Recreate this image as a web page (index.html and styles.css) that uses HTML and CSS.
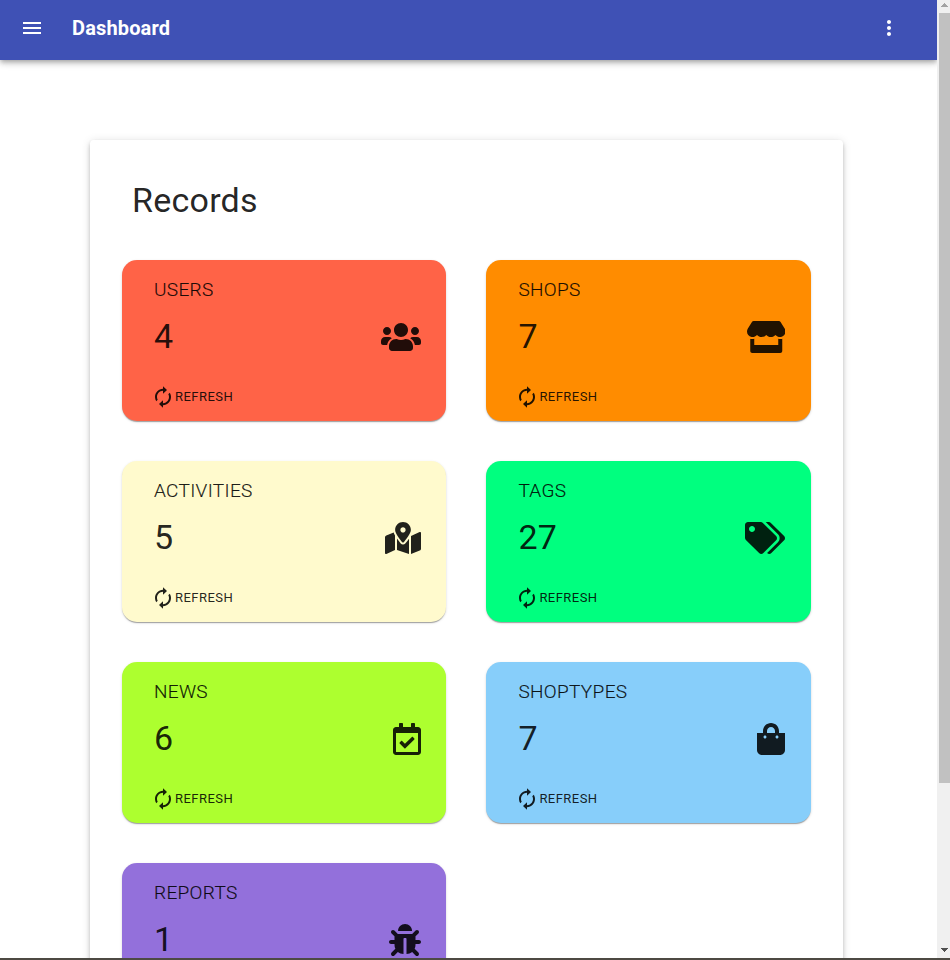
FILE: index.html
```
<!DOCTYPE html>
<html lang="en">
<head>
<meta charset="utf-8">
<title>Dashboard</title>
<link rel="stylesheet" href="styles.css">
</head>
<body>
<svg class="defs" width="0" height="0">
  <symbol id="refresh" viewBox="0 0 24 24"><path d="M12 5.8v2.9L16 5l-4-3.8v2.6c-4.42 0-8 3.78-8 8.2 0 1.57.46 3.03 1.24 4.26L6.7 14.8c-.45-.83-.7-1.79-.7-2.8 0-3.31 2.69-6.2 6-6.2zm6.76 1.94L17.3 9.2c.44.84.7 1.79.7 2.8 0 3.31-2.69 6.2-6 6.2v-2.9L8 19l4 3.8v-2.6c4.42 0 8-3.78 8-8.2 0-1.57-.46-3.03-1.24-4.26z"/></symbol>
</svg>
<div class="window">
  <div class="page">
    <header class="appbar">
      <svg class="menu" viewBox="0 0 24 24"><path d="M3 18h18v-2H3v2zm0-5h18v-2H3v2zm0-7v2h18V6H3z"/></svg>
      <h1 class="title">Dashboard</h1>
      <svg class="more" viewBox="0 0 24 24"><path d="M12 8c1.1 0 2-.9 2-2s-.9-2-2-2-2 .9-2 2 .9 2 2 2zm0 2c-1.1 0-2 .9-2 2s.9 2 2 2 2-.9 2-2-.9-2-2-2zm0 6c-1.1 0-2 .9-2 2s.9 2 2 2 2-.9 2-2-.9-2-2-2z"/></svg>
    </header>
    <main class="panel">
      <h2 class="heading">Records</h2>
      <div class="grid">
        <section class="card users">
          <div class="label">USERS</div>
          <div class="row"><span class="count">4</span><svg class="icon" viewBox="0 0 640 512"><path d="M96 224c35.3 0 64-28.7 64-64s-28.7-64-64-64-64 28.7-64 64 28.7 64 64 64zm448 0c35.3 0 64-28.7 64-64s-28.7-64-64-64-64 28.7-64 64 28.7 64 64 64zm32 32h-64c-17.6 0-33.5 7.1-45.1 18.6 40.3 22.1 68.9 62 75.1 109.4h66c17.7 0 32-14.3 32-32v-32c0-35.3-28.7-64-64-64zm-256 0c61.9 0 112-50.1 112-112S381.9 32 320 32 208 82.1 208 144s50.1 112 112 112zm76.8 32h-8.3c-20.8 10-43.9 16-68.5 16s-47.6-6-68.5-16h-8.3C179.6 288 128 339.6 128 403.2V432c0 26.5 21.5 48 48 48h288c26.5 0 48-21.5 48-48v-28.8c0-63.6-51.6-115.2-115.2-115.2zm-223.7-13.4C161.5 263.1 145.6 256 128 256H64c-35.3 0-64 28.7-64 64v32c0 17.7 14.3 32 32 32h65.9c6.3-47.4 34.9-87.3 75.2-109.4z"/></svg></div>
          <div class="action"><svg class="refresh"><use href="#refresh"/></svg><span>REFRESH</span></div>
        </section>
        <section class="card shops">
          <div class="label">SHOPS</div>
          <div class="row"><span class="count">7</span><svg class="icon" viewBox="0 0 616 512"><path d="M602 118.6L537.1 15C531.3 5.7 521 0 510 0H106C95 0 84.7 5.7 78.9 15L14 118.6c-33.5 53.5-3.8 127.9 58.8 136.4 4.5.6 9.1.9 13.7.9 29.6 0 55.8-13 73.8-33.1 18 20.1 44.3 33.1 73.8 33.1 29.6 0 55.8-13 73.8-33.1 18 20.1 44.3 33.1 73.8 33.1 29.6 0 55.8-13 73.8-33.1 18.1 20.1 44.3 33.1 73.8 33.1 4.7 0 9.2-.3 13.7-.9 62.8-8.4 92.6-82.8 59-136.4zM529.5 288c-10 0-19.9-1.5-29.5-3.8V384H116v-99.8c-9.6 2.2-19.5 3.8-29.5 3.8-6 0-12.1-.4-18-1.2-5.6-.8-11.1-2.1-16.4-3.6V480c0 17.7 14.3 32 32 32h448c17.7 0 32-14.3 32-32V283.2c-5.4 1.6-10.8 2.9-16.4 3.6-6.1.8-12.1 1.2-18.2 1.2z"/></svg></div>
          <div class="action"><svg class="refresh"><use href="#refresh"/></svg><span>REFRESH</span></div>
        </section>
        <section class="card activities">
          <div class="label">ACTIVITIES</div>
          <div class="row"><span class="count">5</span><svg class="icon" viewBox="0 0 576 512"><path d="M288 0c-69.59 0-126 56.41-126 126 0 56.26 82.35 158.8 113.9 196.02 6.39 7.54 17.82 7.54 24.2 0C331.65 284.8 414 182.26 414 126 414 56.41 357.59 0 288 0zm0 168c-23.2 0-42-18.8-42-42s18.8-42 42-42 42 18.8 42 42-18.8 42-42 42zM20.12 215.95A32.006 32.006 0 0 0 0 245.66v250.32c0 11.32 11.43 19.06 21.94 14.86L160 448V214.92c-8.84-15.98-16.07-31.54-21.25-46.42L20.12 215.95zM288 359.67c-14.07 0-27.38-6.18-36.51-16.96-19.66-23.2-40.57-49.62-59.49-76.72v182l192 64V266c-18.92 27.09-39.82 53.52-59.49 76.72-9.13 10.77-22.44 16.95-36.51 16.95zm266.06-198.51L416 224v288l139.88-55.95A31.996 31.996 0 0 0 576 426.34V176.02c0-11.32-11.43-19.06-21.94-14.86z"/></svg></div>
          <div class="action"><svg class="refresh"><use href="#refresh"/></svg><span>REFRESH</span></div>
        </section>
        <section class="card tags">
          <div class="label">TAGS</div>
          <div class="row"><span class="count">27</span><svg class="icon" viewBox="0 0 640 512"><path d="M497.941 225.941L286.059 14.059A48 48 0 0 0 252.118 0H48C21.49 0 0 21.49 0 48v204.118a48 48 0 0 0 14.059 33.941l211.882 211.882c18.744 18.745 49.136 18.746 67.882 0l204.118-204.118c18.745-18.745 18.745-49.137 0-67.882zM112 160c-26.51 0-48-21.49-48-48s21.49-48 48-48 48 21.49 48 48-21.49 48-48 48zm513.941 133.823L421.823 497.941c-18.745 18.745-49.137 18.745-67.882 0l-.36-.36L527.64 323.522c16.999-16.999 26.36-39.6 26.36-63.64s-9.362-46.641-26.36-63.64L331.397 0h48.721a48 48 0 0 1 33.941 14.059l211.882 211.882c18.745 18.745 18.745 49.137 0 67.882z"/></svg></div>
          <div class="action"><svg class="refresh"><use href="#refresh"/></svg><span>REFRESH</span></div>
        </section>
        <section class="card news">
          <div class="label">NEWS</div>
          <div class="row"><span class="count">6</span><svg class="icon" viewBox="0 0 448 512"><path d="M400 64h-48V12c0-6.627-5.373-12-12-12h-40c-6.627 0-12 5.373-12 12v52H160V12c0-6.627-5.373-12-12-12h-40c-6.627 0-12 5.373-12 12v52H48C21.49 64 0 85.49 0 112v352c0 26.51 21.49 48 48 48h352c26.51 0 48-21.49 48-48V112c0-26.51-21.49-48-48-48zm-6 400H54a6 6 0 0 1-6-6V160h352v298a6 6 0 0 1-6 6zm-52.849-200.65L198.842 404.519c-4.705 4.667-12.303 4.637-16.971-.068l-75.091-75.699c-4.667-4.705-4.637-12.303.068-16.971l22.719-22.536c4.705-4.667 12.303-4.637 16.97.069l44.104 44.461 111.072-110.181c4.705-4.667 12.303-4.637 16.971.068l22.536 22.718c4.667 4.705 4.636 12.303-.069 16.97z"/></svg></div>
          <div class="action"><svg class="refresh"><use href="#refresh"/></svg><span>REFRESH</span></div>
        </section>
        <section class="card shoptypes">
          <div class="label">SHOPTYPES</div>
          <div class="row"><span class="count">7</span><svg class="icon" viewBox="0 0 448 512"><path d="M352 160v-32C352 57.42 294.579 0 224 0 153.42 0 96 57.42 96 128v32H0v272c0 44.183 35.817 80 80 80h288c44.183 0 80-35.817 80-80V160h-96zm-192-32c0-35.29 28.71-64 64-64s64 28.71 64 64v32H160v-32zm160 120c-13.255 0-24-10.745-24-24s10.745-24 24-24 24 10.745 24 24-10.745 24-24 24zm-192 0c-13.255 0-24-10.745-24-24s10.745-24 24-24 24 10.745 24 24-10.745 24-24 24z"/></svg></div>
          <div class="action"><svg class="refresh"><use href="#refresh"/></svg><span>REFRESH</span></div>
        </section>
        <section class="card reports">
          <div class="label">REPORTS</div>
          <div class="row"><span class="count">1</span><svg class="icon" viewBox="0 0 512 512"><path d="M511.988 288.9c-.478 17.43-15.217 31.1-32.653 31.1H424v16c0 21.864-4.882 42.584-13.6 61.145l60.228 60.228c12.496 12.497 12.496 32.758 0 45.255-12.498 12.497-32.759 12.496-45.256 0l-54.736-54.736C345.886 467.965 314.351 480 280 480V236c0-6.627-5.373-12-12-12h-24c-6.627 0-12 5.373-12 12v244c-34.351 0-65.886-12.035-90.636-32.108l-54.736 54.736c-12.498 12.497-32.759 12.496-45.256 0-12.496-12.497-12.496-32.758 0-45.255l60.228-60.228C92.882 378.584 88 357.864 88 336v-16H32.666C15.23 320 .491 306.33.013 288.9-.484 270.816 14.028 256 32 256h56v-58.745l-46.628-46.628c-12.496-12.497-12.496-32.758 0-45.255 12.498-12.497 32.758-12.497 45.256 0L141.255 160h229.489l54.627-54.627c12.498-12.497 32.758-12.497 45.256 0 12.496 12.497 12.496 32.758 0 45.255L424 197.255V256h56c17.972 0 32.484 14.816 31.988 32.9zM257 0c-61.856 0-112 50.144-112 112h224C369 50.144 318.856 0 257 0z"/></svg></div>
        </section>
      </div>
    </main>
  </div>
  <div class="scrollbar">
    <svg class="arrow up" viewBox="0 0 7 4"><path d="M0 4V3h1V2h1V1h1V0h1v1h1v1h1v1h1v1z"/></svg>
    <div class="thumb"></div>
    <svg class="arrow down" viewBox="0 0 7 4"><path d="M0 0v1h1v1h1v1h1v1h1V3h1V2h1V1h1V0z"/></svg>
  </div>
</div>
<div class="edge"></div>
</body>
</html>
```
FILE: styles.css
```
* { box-sizing: border-box; }
body {
  margin: 0;
  height: 960px;
  overflow: hidden;
  background: #fff;
  color: rgba(0, 0, 0, .87);
  font-family: Roboto, "Liberation Sans", sans-serif;
}
svg { display: block; fill: currentColor; flex: none; }
.defs { position: absolute; }
.window { display: flex; height: 958px; }
.page { width: 937px; height: 958px; overflow: hidden; }
.appbar {
  display: flex;
  align-items: center;
  height: 60px;
  padding: 0 36px 4px 20px;
  background: #3f51b5;
  color: #fff;
  box-shadow: 0 2px 4px -1px rgba(0, 0, 0, .2), 0 4px 5px 0 rgba(0, 0, 0, .14), 0 1px 10px 0 rgba(0, 0, 0, .12);
}
.menu, .more { width: 24px; height: 24px; }
.title {
  flex: 1;
  margin: 0 0 0 28px;
  font-size: 20px;
  font-weight: 700;
  line-height: 32px;
  letter-spacing: .15px;
}
.panel {
  width: 753px;
  height: 1040px;
  margin: 80px 0 0 90px;
  padding: 40px 32px;
  border-radius: 4px;
  box-shadow: 0 2px 4px -1px rgba(0, 0, 0, .16), 0 3px 5px 0 rgba(0, 0, 0, .1), 0 1px 10px 0 rgba(0, 0, 0, .12);
}
.heading {
  margin: 0 0 40px;
  padding-left: 10px;
  font-size: 34px;
  font-weight: 400;
  line-height: 40px;
  letter-spacing: .25px;
}
.grid {
  display: grid;
  grid-template-columns: 324.4px 324.6px;
  grid-auto-rows: 161px;
  gap: 40px;
}
.card {
  padding: 17px 25.55px 12px 32px;
  border-radius: 15px;
  box-shadow: 0 2px 1px -1px rgba(0, 0, 0, .2), 0 1px 1px 0 rgba(0, 0, 0, .14), 0 1px 3px 0 rgba(0, 0, 0, .12);
}
.label {
  font-size: 19px;
  font-weight: 300;
  line-height: 26px;
  letter-spacing: .34px;
  -webkit-text-stroke: .2px currentColor;
}
.row {
  display: flex;
  align-items: center;
  justify-content: space-between;
  height: 40px;
  margin-top: 14px;
}
.count { margin-top: -2px; font-size: 34px; line-height: 40px; letter-spacing: .25px; }
.icon { height: 32px; }
.action {
  display: flex;
  align-items: center;
  height: 24px;
  margin: 27px 0 0 -3px;
  font-size: 13px;
  letter-spacing: .46px;
}
.refresh { width: 24px; height: 24px; margin-top: 2px; }
.users { background: #ff6347; }
.shops { background: #ff8c00; }
.activities { background: #fffacd; }
.tags { background: #00ff7f; }
.news { background: #adff2f; }
.shoptypes { background: #87cefa; }
.reports { background: #9370db; }
.scrollbar {
  display: flex;
  flex-direction: column;
  align-items: center;
  width: 13px;
  padding: 3px 0 6px 2px;
  background: #f0f0f0;
}
.arrow { width: 7px; height: 4px; }
.up { color: #a3a3a3; }
.down { margin-top: auto; color: #505050; }
.thumb { width: 11px; height: 770px; margin-top: 6px; background: #c1c1c1; }
.edge { height: 2px; background: #4d4a43; }
```
